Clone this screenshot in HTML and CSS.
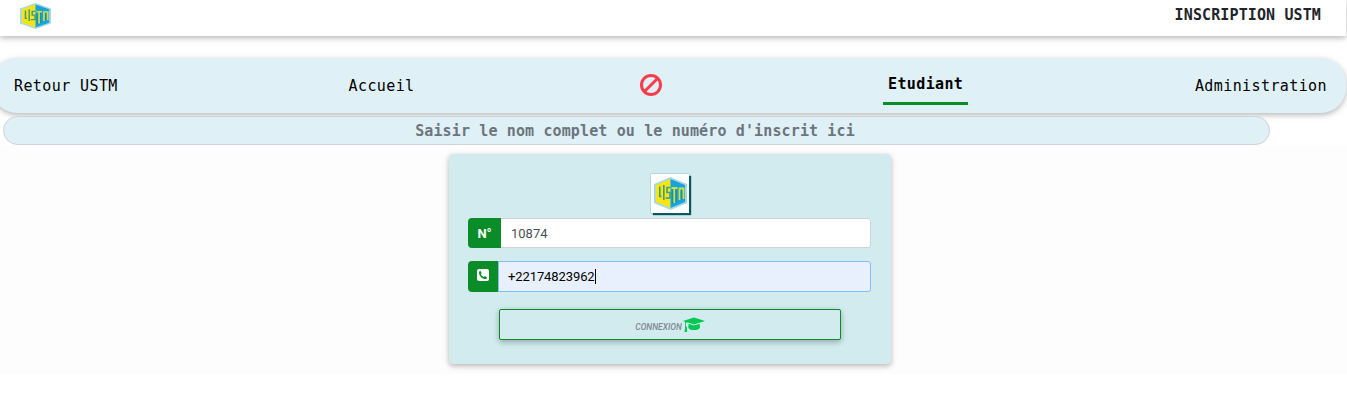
FILE: index.html
```html
<!DOCTYPE html>
<html lang="fr">
<head>
<meta charset="utf-8">
<title>Inscription USTM</title>
<link rel="stylesheet" href="styles.css">
</head>
<body>
<svg class="defs" width="0" height="0">
  <symbol id="logo" viewBox="0 0 33 33" preserveAspectRatio="none">
    <path fill="#a8d8e4" d="M16.500 0 33 7v19L16.500 33 0 26V7z"/>
    <path fill="#f7e411" d="M16.500 2v29L2 25V8z"/>
    <path fill="#16a3e0" d="M16.500 2v29L31 25V8z"/>
    <path fill="none" stroke="#3f9f82" stroke-width="1.600" d="M5.800 9.500V19.500H7.500M9.800 8v15M16.500 10.500H13v5h3v5.500h-4.500"/>
    <path fill="none" stroke="#d5de35" stroke-width="1.800" d="M17.500 11h6M20.300 11v15M25.500 23V11.500h4V22"/>
    <path fill="none" stroke="#1e8e85" stroke-width="1" d="M18.300 13v14M22 12.500v13M27.300 13v9"/>
  </symbol>
</svg>
<header class="topbar">
  <svg class="brand"><use href="#logo"/></svg>
  <span class="title">INSCRIPTION USTM</span>
</header>
<nav class="menu">
  <a>Retour USTM</a>
  <a class="home">Accueil</a>
  <svg class="ban" viewBox="0 0 22 22"><g fill="none" stroke="#fb3a4a" stroke-width="3"><circle cx="11" cy="11" r="9.500"/><path d="M4.500 17.500l13-13"/></g></svg>
  <a class="active">Etudiant</a>
  <a>Administration</a>
</nav>
<main>
  <div class="search">Saisir le nom complet ou le numéro d'inscrit ici</div>
  <section class="card">
    <div class="badge"><svg class="badge-logo"><use href="#logo"/></svg></div>
    <div class="field number"><span class="addon">N°</span><span class="value">10874</span></div>
    <div class="field phone"><span class="addon"><svg width="12" height="12" viewBox="0 0 12 12"><rect width="12" height="12" rx="2" fill="#fff"/><path fill="#0a8d29" d="M2 3.200C2 2.500 2.900 2 3.500 2l1.200 2.200-.9.900c.6 1.300 1.600 2.400 3 3l.9-1L10 8.400c0 .7-.5 1.600-1.300 1.600C5 10 2 7 2 3.200z"/></svg></span><span class="value">+22174823962<i class="caret"></i></span></div>
    <div class="submit"><span>CONNEXION</span><svg class="cap" viewBox="0 0 22 16"><path fill="#00c851" d="M11 .5 22 4 11 7.500 5 5.500 3 5.700V9l.8 1v1l.4 4H1.500L2 11V10l.2-1V5L0 4zM5.600 6.700 11 8.500l5.700-1.800.3 4C16 12.300 14 13 11 13s-5-.7-5.700-2.300z"/></svg></div>
  </section>
</main>
</body>
</html>
```
FILE: styles.css
```css
* { box-sizing: border-box; }
body { margin: 0; height: 417px; overflow: hidden; background: linear-gradient(#fff 145px, #fdfdfd 145px, #fdfdfd 374px, #fff 374px); font-family: Roboto, sans-serif; }
.defs { display: block; height: 0; }
.topbar { display: flex; justify-content: space-between; height: 36px; margin-right: 1px; padding: 3px 24px 0 20px; background: #fff; box-shadow: 0 2px 5px rgba(0,0,0,.22), 0 2px 10px rgba(0,0,0,.08); }
.brand { width: 31px; height: 26px; }
.title { margin-right: 1px; font: bold 15px/25px "DejaVu Sans Mono", monospace; letter-spacing: .12px; color: #212529; }
.menu { display: flex; align-items: center; justify-content: space-between; height: 55px; margin: 22px 1px 0 -8px; padding: 0 19px 0 22px; border-radius: 25px; background: #dff0f7; box-shadow: 0 2px 5px rgba(0,0,0,.22), 0 2px 10px rgba(0,0,0,.08); font: 15px/24px "DejaVu Sans Mono", monospace; letter-spacing: .4px; color: #000; }
.home { margin-left: 4px; }
.ban { width: 22px; height: 22px; margin: 0 -6px 2px -1px; }
.active { align-self: flex-start; margin-top: 14px; padding: 0 5px 6px; border-bottom: 3px solid #0a8d29; font-weight: bold; letter-spacing: .35px; }
main { display: flow-root; }
.search { width: 1267px; height: 29px; margin: 3px 0 0 3px; padding-right: 3px; border: 1px solid #ced4da; border-radius: 15px; background: #dff0f7; text-align: center; font: bold 15px/29px "DejaVu Sans Mono", monospace; letter-spacing: .13px; color: #6c757d; }
.card { width: 442px; height: 210px; margin: 9px 0 0 449px; padding: 20px 20px 0 19px; border-radius: 4px; background: #d1ebef; box-shadow: 0 2px 5px rgba(0,0,0,.22), 0 2px 10px rgba(0,0,0,.08); }
.badge { display: flex; align-items: center; justify-content: center; width: 38px; height: 39px; margin-left: 183px; background: #fff; box-shadow: 0 0 1px #2a8a96, 2px 2px 1px #07545f; }
.badge-logo { width: 33px; height: 33px; }
.field { display: flex; width: 403px; height: 30px; font-size: 13px; }
.addon { display: flex; align-items: center; justify-content: center; width: 33px; border-radius: 4px 0 0 4px; background: #0a8d29; color: #fff; font-weight: bold; }
.value { display: flex; flex: 1; align-items: center; padding-left: 10px; border: 1px solid #ced4da; border-left: 0; border-radius: 0 3px 3px 0; background: #fff; color: #495057; }
.number { margin-top: 5px; }
.phone { height: 31px; margin-top: 13px; }
.phone .addon { width: 30px; padding-bottom: 3px; }
.phone .value { padding-left: 9px; border: 1px solid #80bdff; background: #e8f0fe; color: #000; letter-spacing: -.1px; }
.caret { width: 1px; height: 15px; background: #000; }
.submit { display: flex; align-items: center; justify-content: center; width: 342px; height: 31px; margin: 17px 0 0 31px; border: 1px solid #0a8d29; border-radius: 2px; box-shadow: 0 2px 5px rgba(0,0,0,.2), 0 2px 8px rgba(0,0,0,.1); background: #d1ebef; color: #818a8f; font-size: 8.500px; font-style: italic; font-weight: 500; }
.submit span { margin-top: 5px; }
.cap { width: 22px; height: 16px; margin-left: 1px; }
```
